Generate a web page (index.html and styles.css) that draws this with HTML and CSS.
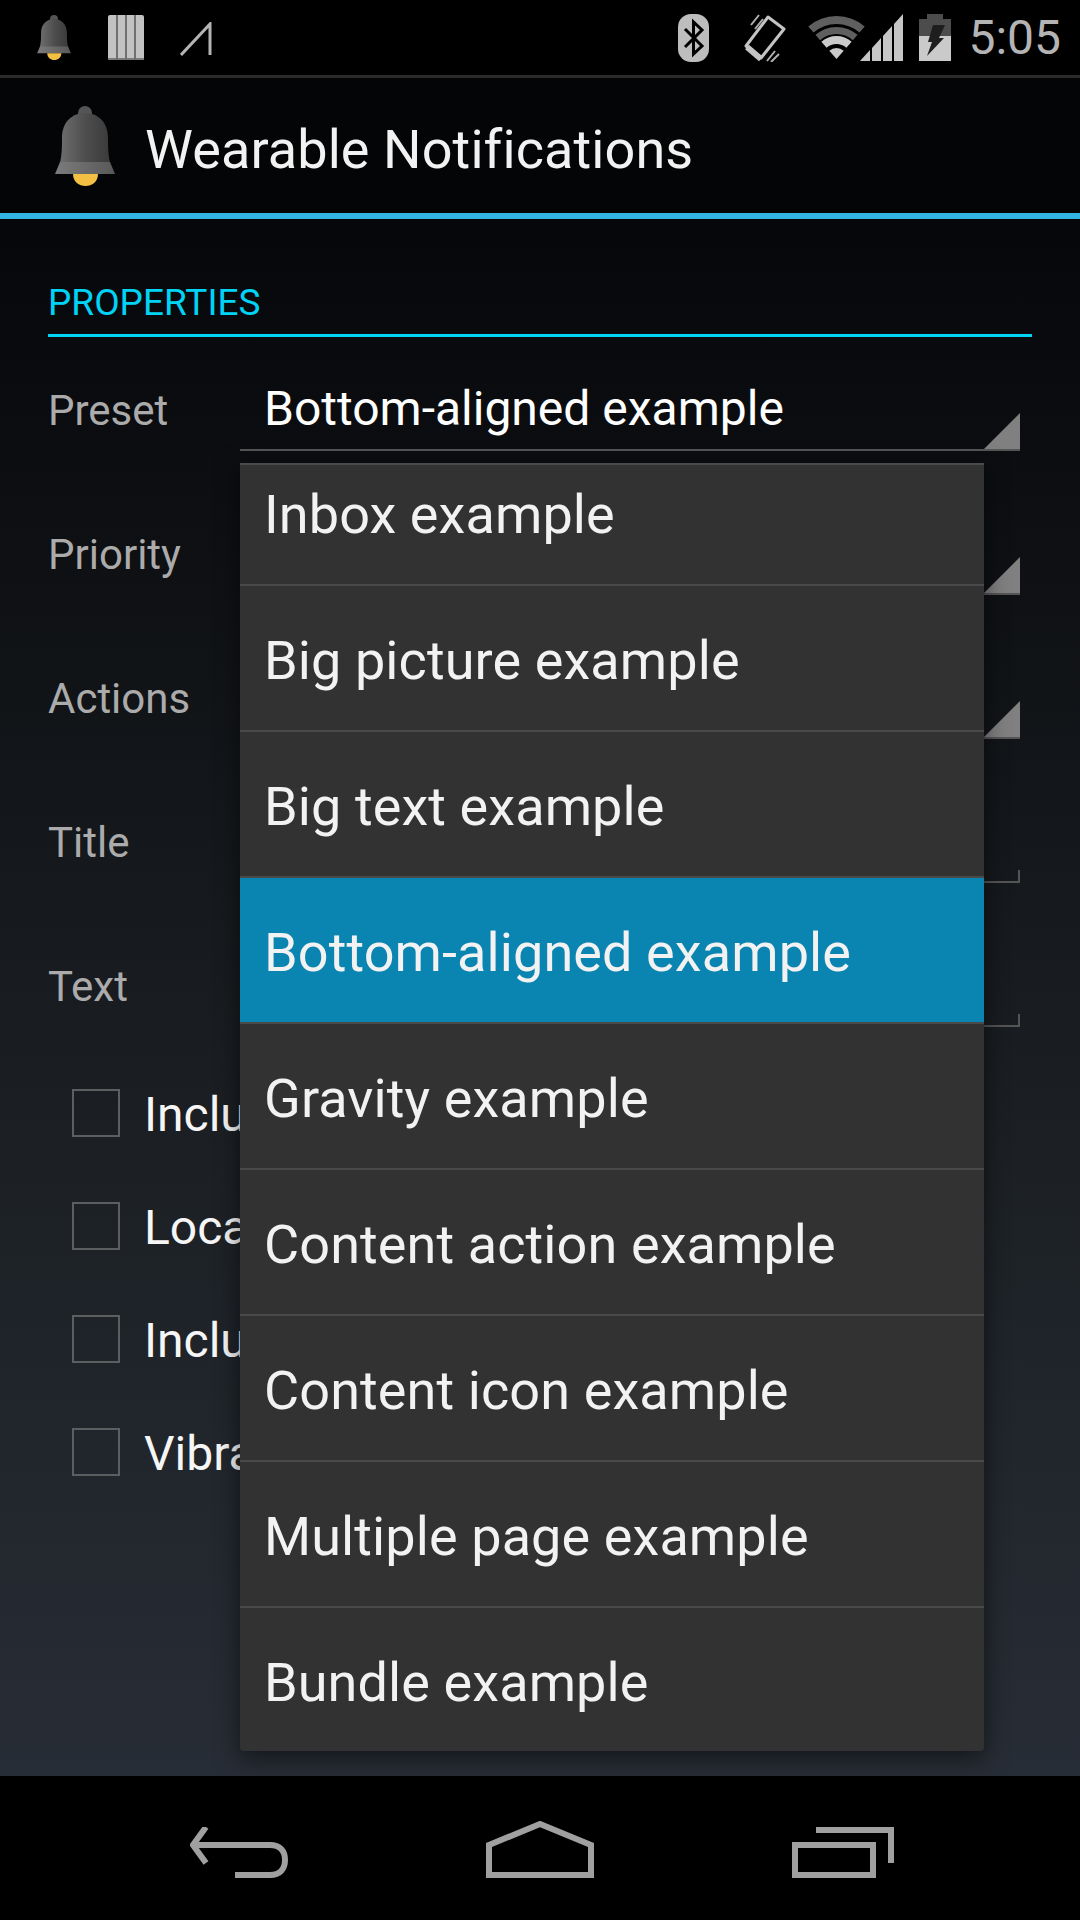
FILE: index.html
```html
<!DOCTYPE html>
<html>
<head>
    <title>Wearable Notifications</title>
    <link rel="stylesheet" href="styles.css">
</head>
<body>
    <svg class="defs" width="0" height="0">
        <defs>
            <linearGradient id="bellBody" x1="0" x2="1" y1="0" y2="0">
                <stop offset="0" stop-color="#6e6e6e"/>
                <stop offset="0.5" stop-color="#4e4e4e"/>
                <stop offset="1" stop-color="#3a3a3a"/>
            </linearGradient>
            <linearGradient id="bellBand" x1="0" x2="1" y1="0" y2="0">
                <stop offset="0" stop-color="#7c7c7c"/>
                <stop offset="1" stop-color="#585858"/>
            </linearGradient>
            <symbol id="bell" viewBox="0 0 60 80">
                <circle cx="30" cy="7" r="7" fill="#555"/>
                <path d="M5 57 C7 48 7 40 7 32 C7 15 18 7 30 7 C42 7 53 15 53 32 C53 40 53 48 55 57 Z" fill="url(#bellBody)"/>
                <path d="M5 56 H55 L60 68 H0 Z" fill="url(#bellBand)"/>
                <path d="M18 68 H43 C43 76 37 80 30.500 80 C24 80 18 76 18 68 Z" fill="#f4c043"/>
            </symbol>
        </defs>
    </svg>

    <div class="screen">
        <div class="status-bar">
            <div class="status-left">
                <svg class="status-bell"><use href="#bell"/></svg>
                <svg class="stack-icon" viewBox="0 0 36 45">
                    <path d="M0 2 Q0 0 2 0 H8 V45 H0 Z M10 0 H17 V45 H10 Z M19 0 H26 V45 H19 Z M28 0 H34 Q36 0 36 2 V45 H28 Z" fill="#c2c2c2"/>
                    <path d="M0 43 H36 V45 H0 Z" fill="#7a7a7a"/>
                    <path d="M8 0 H10 V45 H8 Z M17 0 H19 V45 H17 Z M26 0 H28 V45 H26 Z" fill="#707070"/>
                </svg>
                <svg class="sketch-icon" viewBox="0 0 32 34">
                    <path d="M1 33 L30 2 V33" fill="none" stroke="#b4b4b4" stroke-width="3"/>
                </svg>
            </div>
            <div class="status-right">
                <svg class="bt-icon" viewBox="0 0 31 48">
                    <rect width="31" height="48" rx="13" fill="#bdbdbd"/>
                    <path d="M7 15 L24 32 L15.500 40 V8 L24 16 L7 33" fill="none" stroke="#000" stroke-width="3"/>
                </svg>
                <svg class="vibrate-icon" viewBox="0 0 42 48">
                    <path d="M24 3 L40 15 L17 44 L2 32 Z" fill="none" stroke="#c4c4c4" stroke-width="3" stroke-linejoin="round"/>
                    <path d="M3 33 L17 45" fill="none" stroke="#c4c4c4" stroke-width="6"/>
                    <path d="M7 11 L15 1 M11 15 L19 5 M23 47 L31 37 M27 48 L35 40" fill="none" stroke="#b0b0b0" stroke-width="2"/>
                </svg>
                <svg class="wifi-icon" viewBox="0 0 60 46">
                    <path d="M3.900 15.600 A39 39 0 0 1 55.100 15.600" fill="none" stroke="#5f5f5f" stroke-width="8"/>
                    <path d="M10.800 23.500 A28.500 28.500 0 0 1 48.200 23.500" fill="none" stroke="#5f5f5f" stroke-width="7"/>
                    <path d="M17 30.700 A19 19 0 0 1 42 30.700" fill="none" stroke="#cacaca" stroke-width="8"/>
                    <path d="M29.500 45 L22.300 36.700 A11 11 0 0 1 36.700 36.700 Z" fill="#cacaca"/>
                </svg>
                <svg class="signal-icon" viewBox="0 0 43 47">
                    <path d="M0 47 L10 36 V47 Z M12 34 L21 24 V47 H12 Z M23 22 L32 12 V47 H23 Z M34 10 L43 0 V47 H34 Z" fill="#c6c6c6"/>
                </svg>
                <svg class="battery-icon" viewBox="0 0 32 47">
                    <path d="M8 0 H24 V5 H32 V22 H0 V5 H8 Z" fill="#4c4c4c"/>
                    <rect y="22" width="32" height="25" fill="#cacaca"/>
                    <path d="M14 11 H26 L20 24 H25 L8 42 L13 28 H9 Z" fill="#1e1e1e"/>
                </svg>
                <span class="clock">5:05</span>
            </div>
        </div>

        <div class="action-bar">
            <svg class="app-icon"><use href="#bell"/></svg>
            <span class="app-title">Wearable Notifications</span>
        </div>

        <div class="content">
            <div class="section-title">PROPERTIES</div>

            <div class="form-row">
                <label class="form-label">Preset</label>
                <div class="spinner"><span class="spinner-value">Bottom-aligned example</span></div>
            </div>
            <div class="form-row">
                <label class="form-label">Priority</label>
                <div class="spinner"></div>
            </div>
            <div class="form-row">
                <label class="form-label">Actions</label>
                <div class="spinner"></div>
            </div>
            <div class="form-row">
                <label class="form-label">Title</label>
                <div class="edit-field"></div>
            </div>
            <div class="form-row">
                <label class="form-label">Text</label>
                <div class="edit-field"></div>
            </div>

            <div class="checks">
                <div class="check-row"><span class="checkbox"></span><span class="check-label">Inclu</span></div>
                <div class="check-row"><span class="checkbox"></span><span class="check-label">Loca</span></div>
                <div class="check-row"><span class="checkbox"></span><span class="check-label">Inclu</span></div>
                <div class="check-row"><span class="checkbox"></span><span class="check-label">Vibra</span></div>
            </div>
        </div>

        <div class="nav-bar">
            <svg class="nav-back" viewBox="0 0 98 51">
                <path d="M16 0 L3 18 L16 36" fill="none" stroke="#a0a0a0" stroke-width="6"/>
                <path d="M3 18 H80 C90 18 95 24 95 33 C95 42 90 48 80 48 H45" fill="none" stroke="#a0a0a0" stroke-width="6"/>
            </svg>
            <svg class="nav-home" viewBox="0 0 108 57">
                <path d="M3 54 V24 L54 3 L105 24 V54 Z" fill="none" stroke="#a0a0a0" stroke-width="6"/>
            </svg>
            <svg class="nav-recent" viewBox="0 0 102 51">
                <rect x="3" y="18" width="78" height="30" fill="none" stroke="#a0a0a0" stroke-width="6"/>
                <path d="M24 3 H99 V36" fill="none" stroke="#a0a0a0" stroke-width="6"/>
            </svg>
        </div>

        <div class="popup">
            <ul class="popup-list">
                <li>Inbox example</li>
                <li>Big picture example</li>
                <li>Big text example</li>
                <li class="selected">Bottom-aligned example</li>
                <li>Gravity example</li>
                <li>Content action example</li>
                <li>Content icon example</li>
                <li>Multiple page example</li>
                <li>Bundle example</li>
            </ul>
        </div>
    </div>
</body>
</html>
```

FILE: styles.css
```css
body {
    margin: 0;
    background-color: #000;
    font-family: Roboto, "Liberation Sans", sans-serif;
}

.defs {
    position: absolute;
}

.screen {
    position: relative;
    width: 1080px;
    height: 1920px;
    display: flex;
    flex-direction: column;
    overflow: hidden;
}

/* status bar */
.status-bar {
    height: 75px;
    border-bottom: 3px solid #2a2a2a;
    background-color: #000;
    display: flex;
    justify-content: space-between;
    align-items: center;
}

.status-left,
.status-right {
    display: flex;
    align-items: center;
}

.status-left {
    padding-left: 37px;
}

.status-right {
    padding-right: 19px;
}

.status-bell {
    width: 34px;
    height: 45px;
}

.stack-icon {
    width: 36px;
    height: 45px;
    margin-left: 37px;
}

.sketch-icon {
    width: 32px;
    height: 34px;
    margin-left: 36px;
    margin-top: 3px;
}

.bt-icon {
    width: 31px;
    height: 48px;
}

.vibrate-icon {
    width: 42px;
    height: 48px;
    margin-left: 35px;
}

.wifi-icon {
    width: 60px;
    height: 46px;
    margin-left: 21px;
    margin-top: -1px;
}

.signal-icon {
    width: 43px;
    height: 47px;
    margin-left: -7px;
}

.battery-icon {
    width: 32px;
    height: 47px;
    margin-left: 16px;
}

.clock {
    margin-left: 17px;
    font-size: 48px;
    color: #b4b4b4;
}

/* action bar */
.action-bar {
    height: 135px;
    border-bottom: 6px solid #33b5e5;
    background-color: #040506;
    display: flex;
    align-items: center;
    padding-left: 55px;
}

.app-icon {
    width: 60px;
    height: 80px;
}

.app-title {
    margin-left: 30px;
    padding-top: 8px;
    font-size: 54px;
    letter-spacing: 0.1px;
    color: #f2f2f2;
}

/* form */
.content {
    flex: 1;
    padding: 0 48px;
    background: linear-gradient(#06070a, #1c2024 60%, #272d36);
}

.section-title {
    height: 118px;
    box-sizing: border-box;
    padding-top: 61px;
    border-bottom: 3px solid #00d3f5;
    font-size: 37px;
    line-height: 46px;
    color: #00d3f5;
}

.form-row {
    display: flex;
    align-items: flex-end;
    height: 114px;
    margin-bottom: 30px;
}

.form-label {
    width: 192px;
    padding-bottom: 15px;
    font-size: 42px;
    line-height: 50px;
    color: #ababab;
}

.spinner,
.edit-field {
    position: relative;
    width: 780px;
    height: 100%;
    box-sizing: border-box;
    border-bottom: 2px solid #555;
    display: flex;
    align-items: flex-end;
}

.spinner::after {
    content: "";
    position: absolute;
    right: 0;
    bottom: 0;
    width: 36px;
    height: 36px;
    background-color: #808080;
    clip-path: polygon(100% 0, 100% 100%, 0 100%);
}

.edit-field::after {
    content: "";
    position: absolute;
    right: 0;
    bottom: 0;
    width: 2px;
    height: 11px;
    background-color: #555;
}

.spinner-value {
    padding: 0 0 12px 24px;
    font-size: 48px;
    line-height: 56px;
    color: #fff;
}

.checks {
    margin-top: 62px;
    padding-left: 24px;
}

.check-row {
    display: flex;
    align-items: center;
    height: 48px;
    margin-bottom: 65px;
}

.checkbox {
    width: 48px;
    height: 48px;
    box-sizing: border-box;
    border: 2px solid #5c5e60;
}

.check-label {
    margin-left: 24px;
    padding-top: 3px;
    white-space: nowrap;
    font-size: 48px;
    color: #f6f6f6;
}

/* navigation */
.nav-bar {
    height: 144px;
    background-color: #000;
    display: flex;
    align-items: flex-start;
}

.nav-back {
    width: 98px;
    height: 51px;
    margin: 51px 0 0 190px;
}

.nav-home {
    width: 108px;
    height: 57px;
    margin: 45px 0 0 198px;
}

.nav-recent {
    width: 102px;
    height: 51px;
    margin: 51px 0 0 198px;
}

/* open spinner dropdown */
.popup {
    position: absolute;
    left: 240px;
    top: 463px;
    width: 744px;
    height: 1286px;
    overflow: hidden;
    background-color: #323232;
    border-top: 2px solid #4a4a4a;
    border-radius: 0 0 4px 4px;
    box-shadow: 0 6px 24px rgba(0, 0, 0, 0.55);
}

.popup-list {
    list-style: none;
    margin: -25px 0 0;
    padding: 0;
}

.popup-list li {
    height: 146px;
    box-sizing: border-box;
    border-bottom: 2px solid #4a4a4a;
    padding-left: 24px;
    font-size: 54px;
    letter-spacing: 0.1px;
    line-height: 149px;
    color: #f2f2f2;
}

.popup-list li:last-child {
    border-bottom: none;
}

.popup-list .selected {
    background-color: #0a84b0;
}
```
